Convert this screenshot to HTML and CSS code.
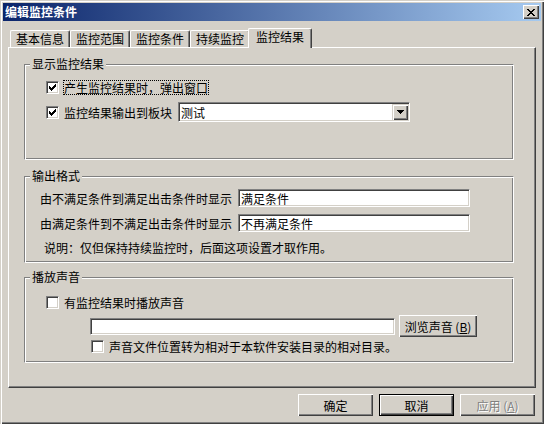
FILE: index.html
```html
<!DOCTYPE html>
<html lang="zh-CN">
<head>
    <meta charset="UTF-8">
    <meta name="viewport" content="width=device-width, initial-scale=1.0">
    <title>编辑监控条件</title>
    <link rel="stylesheet" href="styles.css">
</head>
<body>
    <div class="window">
        <div class="titlebar">
            <span class="title">编辑监控条件</span>
            <span class="close">
                <svg width="8" height="7" viewBox="0 0 8 7" shape-rendering="crispEdges"><path fill="#000" d="M0 0h2v1H0zM6 0h2v1H6zM1 1h2v1H1zM5 1h2v1H5zM2 2h4v1H2zM3 3h2v1H3zM2 4h4v1H2zM1 5h2v1H1zM5 5h2v1H5zM0 6h2v1H0zM6 6h2v1H6z"/></svg>
            </span>
        </div>

        <div class="tabs">
            <span class="tab">基本信息</span>
            <span class="tab">监控范围</span>
            <span class="tab">监控条件</span>
            <span class="tab">持续监控</span>
            <span class="tab active">监控结果</span>
        </div>

        <div class="panel">
            <!-- 显示 -->
            <div class="group g1">
                <div class="legend">显示监控结果</div>
                <div class="row g1-r1">
                    <span class="check"><svg width="7" height="7" viewBox="0 0 7 7" shape-rendering="crispEdges"><path fill="#000" d="M6 0h1v1H6zM5 1h2v1H5zM0 2h1v1H0zM4 2h3v1H4zM0 3h2v1H0zM3 3h3v1H3zM0 4h5v1H0zM1 5h3v1H1zM2 6h1v1H2z"/></svg></span>
                    <span class="focus">产生监控结果时，弹出窗口</span>
                </div>
                <div class="row g1-r2">
                    <span class="check"><svg width="7" height="7" viewBox="0 0 7 7" shape-rendering="crispEdges"><path fill="#000" d="M6 0h1v1H6zM5 1h2v1H5zM0 2h1v1H0zM4 2h3v1H4zM0 3h2v1H0zM3 3h3v1H3zM0 4h5v1H0zM1 5h3v1H1zM2 6h1v1H2z"/></svg></span>
                    <span>监控结果输出到板块</span>
                    <div class="combo">
                        <span class="combo-text">测试</span>
                        <span class="combo-btn"><svg width="7" height="4" viewBox="0 0 7 4" shape-rendering="crispEdges"><path fill="#000" d="M0 0h7v1H0zM1 1h5v1H1zM2 2h3v1H2zM3 3h1v1H3z"/></svg></span>
                    </div>
                </div>
            </div>

            <!-- 输出格式 -->
            <div class="group g2">
                <div class="legend">输出格式</div>
                <div class="row g2-r1">
                    <span>由不满足条件到满足出击条件时显示</span>
                    <span class="field fmt">满足条件</span>
                </div>
                <div class="row g2-r2">
                    <span>由满足条件到不满足出击条件时显示</span>
                    <span class="field fmt">不再满足条件</span>
                </div>
                <div class="note">说明：仅但保持持续监控时，后面这项设置才取作用。</div>
            </div>

            <!-- 播放声音 -->
            <div class="group g3">
                <div class="legend">播放声音</div>
                <div class="row g3-r1">
                    <span class="check"></span>
                    <span>有监控结果时播放声音</span>
                </div>
                <div class="row g3-r2">
                    <span class="field sound"></span>
                    <span class="btn browse">浏览声音&nbsp;(<u>B</u>)</span>
                </div>
                <div class="row g3-r3">
                    <span class="check"></span>
                    <span>声音文件位置转为相对于本软件安装目录的相对目录。</span>
                </div>
            </div>
        </div>

        <div class="buttons">
            <span class="btn">确定</span>
            <span class="btn default">取消</span>
            <span class="btn disabled">应用&nbsp;(<u>A</u>)</span>
        </div>
    </div>
</body>
</html>
```

FILE: styles.css
```css
* {
    box-sizing: border-box;
}
body {
    margin: 0;
    background: #d4d0c8;
    font-family: "Noto Sans CJK SC", sans-serif;
    font-size: 12px;
    color: #000;
}
.window {
    width: 544px;
    height: 424px;
    padding: 3px;
    background: #d4d0c8;
    box-shadow: inset 1px 1px #d4d0c8, inset 2px 2px #fff, inset -1px -1px #404040, inset -2px -2px #808080;
}
.titlebar {
    height: 18px;
    display: flex;
    align-items: center;
    justify-content: space-between;
    padding: 0 2px;
    background: linear-gradient(to right, #0a246a, #a6caf0);
}
.title {
    color: #fff;
    font-weight: bold;
    line-height: 14px;
}
.close {
    width: 16px;
    height: 14px;
    display: flex;
    align-items: center;
    justify-content: center;
    background: #d4d0c8;
    box-shadow: inset 1px 1px #fff, inset -1px -1px #404040, inset -2px -2px #808080;
}

/* tabs */
.tabs {
    height: 26px;
    display: flex;
    align-items: flex-end;
    margin: 0 5px;
    padding-left: 2px;
}
.tab {
    height: 17px;
    padding: 0 5px;
    line-height: 16px;
    background: #d4d0c8;
    border-top: 1px solid #fff;
    border-left: 1px solid #fff;
    border-right: 1px solid #404040;
    border-radius: 2px 2px 0 0;
    box-shadow: inset -1px 0 #808080;
}
.tab.active {
    height: 20px;
    margin: 0 -2px -1px;
    padding: 0 7px;
    position: relative;
    z-index: 1;
}

.panel {
    height: 341px;
    margin: 0 5px;
    padding: 16px 0 0 15px;
    border: 1px solid;
    border-color: #fff #404040 #404040 #fff;
    box-shadow: inset -1px -1px #808080;
}

/* groups */
.group {
    width: 490px;
    border: 1px solid;
    border-color: #808080 #fff #fff #808080;
    box-shadow: inset 1px 1px #fff, inset -1px -1px #808080;
}
.g1 { height: 96px; }
.g2 { height: 87px; margin-top: 16px; }
.g3 { height: 86px; margin-top: 14px; }
.legend {
    width: fit-content;
    margin: -8px 0 0 5px;
    padding: 0 2px;
    line-height: 14px;
    background: #d4d0c8;
}
.row {
    display: flex;
    align-items: center;
    white-space: nowrap;
}
.g1-r1 { height: 20px; margin-top: 6px; padding-left: 21px; }
.g1-r2 { height: 20px; margin-top: 5px; padding-left: 21px; }
.g2-r1 { height: 18px; margin-top: 6px; padding-left: 15px; }
.g2-r2 { height: 18px; margin-top: 7px; padding-left: 15px; }
.note { margin-top: 8px; padding-left: 19px; line-height: 16px; }
.g3-r1 { height: 20px; margin-top: 8px; padding-left: 21px; }
.g3-r2 { height: 22px; margin-top: 3px; padding-left: 65px; }
.g3-r3 { height: 16px; margin-top: 1px; padding-left: 66px; }

.check {
    flex: none;
    width: 13px;
    height: 13px;
    margin-right: 5px;
    display: flex;
    align-items: center;
    justify-content: center;
    background: #fff;
    border: 1px solid;
    border-color: #808080 #fff #fff #808080;
    box-shadow: inset 1px 1px #404040, inset -1px -1px #d4d0c8;
}
.focus {
    margin-left: -1px;
    border: 1px dotted #000;
    line-height: 13px;
}

/* inputs */
.field, .combo {
    display: flex;
    align-items: center;
    background: #fff;
    border: 1px solid;
    border-color: #808080 #fff #fff #808080;
    box-shadow: inset 1px 1px #404040, inset -1px -1px #d4d0c8;
}
.field {
    padding-left: 2px;
}
.fmt {
    width: 232px;
    height: 18px;
    margin-left: 6px;
}
.sound {
    width: 305px;
    height: 17px;
}
.combo {
    width: 232px;
    height: 20px;
    margin-left: 6px;
    padding: 1px;
}
.combo-text {
    flex: 1;
    padding-left: 1px;
}
.combo-btn {
    width: 16px;
    height: 16px;
    display: flex;
    align-items: center;
    justify-content: center;
    background: #d4d0c8;
    box-shadow: inset 1px 1px #d4d0c8, inset 2px 2px #fff, inset -1px -1px #404040, inset -2px -2px #808080;
}

/* buttons */
.btn {
    display: flex;
    align-items: center;
    justify-content: center;
    width: 75px;
    height: 22px;
    background: #d4d0c8;
    box-shadow: inset 1px 1px #fff, inset -1px -1px #404040, inset -2px -2px #808080;
}
.browse {
    width: 78px;
    margin-left: 4px;
}
.buttons {
    display: flex;
    justify-content: flex-end;
    gap: 6px;
    margin-top: 6px;
    padding-right: 6px;
}
.btn.default {
    border: 1px solid #000;
}
.btn.disabled {
    color: #808080;
    text-shadow: 1px 1px #fff;
}
```
